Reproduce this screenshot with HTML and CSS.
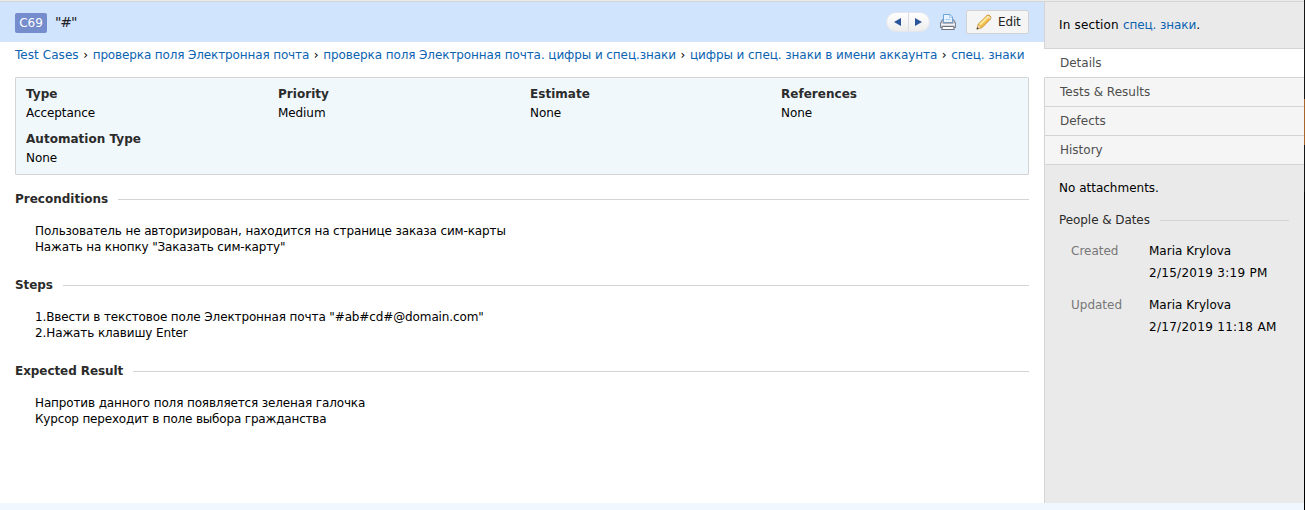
FILE: index.html
```html
<!DOCTYPE html>
<html lang="ru">
<head>
<meta charset="utf-8">
<title>C69</title>
<link rel="stylesheet" href="styles.css">
</head>
<body>
<div class="window">
  <div class="page">
    <main class="main">
      <header class="header">
        <span class="case-id">C69</span>
        <h1 class="title">"#"</h1>
        <div class="pager">
          <a class="pager-item"><svg width="7" height="8" viewBox="0 0 7 8"><path d="M7 0v8L0 4z" fill="#2b559b"/></svg></a>
          <a class="pager-item"><svg width="7" height="8" viewBox="0 0 7 8"><path d="M0 0v8l7-4z" fill="#2b559b"/></svg></a>
        </div>
        <svg class="printer" width="16" height="16" viewBox="0 0 16 16">
          <path d="M2.500 5.500h11l2 3.500v4.500H.5V9z" fill="#b9bcc5" stroke="#7b808c"/>
          <path d="M3.500 8.500v-8h6.500l2.500 2.500v5.500z" fill="#e6f3ff" stroke="#6ca5d8"/>
          <path d="M9.500 1v2.500H12M5.500 5.500h5" fill="none" stroke="#a9cff0"/>
          <path d="M1 9.500h14v2H1z" fill="#f1f2f5"/>
          <path d="M3 9h10" stroke="#8b909b"/>
          <path d="M2.500 12.500h11l.8 3H1.700z" fill="#fff" stroke="#6b707b"/>
        </svg>
        <a class="edit">
          <svg width="16" height="16" viewBox="0 0 16 16">
            <path d="M1 15l1.200-4.800L11 1.500q1.500-1.200 3 .3t.5 3.200L5.800 13.800z" fill="#f3bd4b" stroke="#c8913a"/>
            <path d="M3.800 10.800L11.900 2.700" stroke="#fdebA0" stroke-width="2"/>
            <path d="M10.800 2.300l3 3 .9-1.500-2-2z" fill="#f5e3c0"/>
            <path d="M1 15l1-4 3 3z" fill="#ecd5ae"/><path d="M.5 15.500l.8-2.500 1.700 1.700z" fill="#4d4030"/>
          </svg>
          <span>Edit</span>
        </a>
      </header>
      <nav class="crumbs"><a class="c1">Test Cases</a><i>›</i><a class="c2">проверка поля Электронная почта</a><i>›</i><a class="c3">проверка поля Электронная почта. цифры и спец.знаки</a><i>›</i><a class="c4">цифры и спец. знаки в имени аккаунта</a><i>›</i><a class="c5">спец. знаки</a></nav>
      <dl class="properties">
        <div><dt>Type</dt><dd>Acceptance</dd></div>
        <div><dt>Priority</dt><dd>Medium</dd></div>
        <div><dt>Estimate</dt><dd>None</dd></div>
        <div><dt>References</dt><dd>None</dd></div>
        <div><dt>Automation Type</dt><dd>None</dd></div>
      </dl>
      <section class="block">
        <h2>Preconditions</h2>
        <p><span class="l1">Пользователь не авторизирован, находится на странице заказа сим-карты</span><br><span class="l2">Нажать на кнопку "Заказать сим-карту"</span></p>
      </section>
      <section class="block">
        <h2 class="tight">Steps</h2>
        <p><span class="l3">1.Ввести в текстовое поле Электронная почта "#ab#cd#@domain.com"</span><br><span class="l4">2.Нажать клавишу Enter</span></p>
      </section>
      <section class="block">
        <h2 class="tight">Expected Result</h2>
        <p><span class="l5">Напротив данного поля появляется зеленая галочка</span><br><span class="l6">Курсор переходит в поле выбора гражданства</span></p>
      </section>
    </main>
    <aside class="sidebar">
      <p class="section-name"><span>In section </span><a>спец. знаки</a>.</p>
      <nav class="tabs">
        <a class="tab active">Details</a>
        <a class="tab">Tests &amp; Results</a>
        <a class="tab">Defects</a>
        <a class="tab">History</a>
      </nav>
      <p class="attachments">No attachments.</p>
      <h3>People &amp; Dates</h3>
      <dl class="people">
        <dt>Created</dt><dd>Maria Krylova<br><span>2/15/2019 3:19 PM</span></dd>
        <dt>Updated</dt><dd>Maria Krylova<br><span>2/17/2019 11:18 AM</span></dd>
      </dl>
    </aside>
  </div>
  <div class="edge"></div>
</div>
</body>
</html>
```
FILE: styles.css
```css
* { box-sizing: border-box; }
body { margin: 0; background: #f0f7ff; color: #000; font: 12px/16px Verdana, "DejaVu Sans", sans-serif; overflow: hidden; }
h1, h2, h3, p, dl, dd { margin: 0; }
a { color: #0b63b1; }
.window { display: flex; height: 510px; }
.page { flex: 1; display: flex; height: 503px; border-top: 1px solid #ebebeb; background: #fff; }
.edge { width: 1px; background: linear-gradient(#161616 99px, #a8662d 99px 145px, #161616 145px 192px, #000 192px); }
.main { width: 1044px; border-top: 1px solid #d4d4d4; white-space: nowrap; }
.header { display: flex; align-items: center; height: 40px; padding: 0 15px; background: #d0e4fd; }
.case-id { width: 32px; height: 20px; border-radius: 2px; background: #758ccd; color: #fff; text-align: center; font-size: 12px; letter-spacing: -.1px; line-height: 20px; margin-top: 2px; }
.title { margin: 0 auto 0 8px; font-size: 14px; font-weight: 400; letter-spacing: -1.1px; color: #222; }
.pager { display: flex; width: 44px; height: 20px; border-radius: 10px; border: 1px solid #e3e7ed; overflow: hidden; background: linear-gradient(#fff, #ededed); }
.pager-item { flex: 1; display: flex; align-items: center; justify-content: center; }
.pager-item + .pager-item { border-left: 1px solid #d9dde3; }
.printer { margin: 0 10px; }
.edit { display: flex; align-items: center; gap: 6px; width: 63px; height: 24px; padding-left: 9px; border: 1px solid #d2d2d2; border-radius: 2px; background: #f5f5f5; color: #222; }
.edit span { letter-spacing: -.15px; }
.crumbs { display: flex; height: 35px; padding: 5px 0 0 15px; }
.crumbs i { width: 14px; text-align: center; font-style: normal; }
.c1 { letter-spacing: .06px; }
.c2 { letter-spacing: -.13px; }
.c3 { letter-spacing: -.09px; }
.c4 { letter-spacing: -.07px; }
.c5 { letter-spacing: -.1px; }
.properties { display: grid; grid-template-columns: 252px 252px 251px 1fr; grid-auto-rows: 45px; width: 1014px; height: 98px; margin-left: 15px; padding: 8px 10px 6px; border: 1px solid #d4d4d4; border-radius: 1px; background: #f0f8fc; }
dt { font-weight: 700; color: #2b2b2b; line-height: 17px; }
.properties dt { letter-spacing: .03px; }
.properties dd { line-height: 20px; letter-spacing: -.08px; }
.block { height: 86px; padding: 16px 15px 0; }
h2, h3 { display: flex; align-items: center; font-size: 12px; line-height: 16px; color: #2b2b2b; }
h2::after, h3::after { content: ""; flex: 1; height: 1px; margin: 1px 0 0 10px; background: #d4d4d4; }
.tight { letter-spacing: -.07px; }
.block p { padding: 16px 0 0 20px; }
.l1 { letter-spacing: -.13px; }
.l2 { letter-spacing: -.16px; }
.l3 { letter-spacing: -.12px; }
.l4 { letter-spacing: -.11px; }
.l5 { letter-spacing: -.135px; }
.l6 { letter-spacing: -.175px; }
.sidebar { flex: 1; border-top: 1px solid #d4d4d4; background: linear-gradient(90deg, #d4d4d4 1px, #eaeaea 1px); white-space: nowrap; }
.section-name { height: 46px; padding: 15px 0 0 15px; }
.section-name span { letter-spacing: .17px; }
.section-name a { letter-spacing: -.08px; }
.tabs { display: block; border-top: 1px solid #d4d4d4; }
.tab { display: block; height: 29px; padding: 6px 0 0 15px; border: solid #d4d4d4; border-width: 0 0 1px 1px; background: #f5f5f5; color: #4d4d4d; }
.active { border-left-color: #fff; background: #fff; }
.attachments { padding: 15px 0 0 15px; }
h3 { margin: 16px 15px 0; font-weight: 400; letter-spacing: -.07px; }
.people { display: grid; grid-template-columns: 78px 1fr; grid-auto-rows: 54px; padding: 12px 0 0 27px; line-height: 22px; }
.people dt { color: #777; font-weight: 400; line-height: 22px; }
.people span { letter-spacing: .29px; }
```
